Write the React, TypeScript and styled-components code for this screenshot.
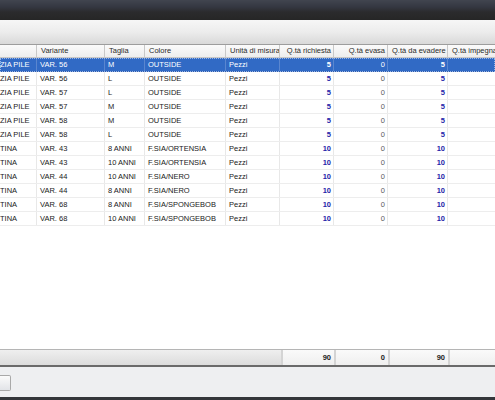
import React from "react";
import styled, { createGlobalStyle } from "styled-components";

const Global = createGlobalStyle`
  html, body { margin: 0; padding: 0; background: #fff; }
  body { font-family: "Liberation Sans", Arial, sans-serif; }
  * { box-sizing: border-box; }
`;

const COLS = "37px 68px 40px 81px 54px 54px 54px 60px 90px";

const Page = styled.div`
  width: 495px;
  height: 400px;
  display: flex;
  flex-direction: column;
  overflow: hidden;
  font-family: "Liberation Sans", Arial, sans-serif;
  font-size: 7.5px;
`;

const TitleBar = styled.div`
  height: 20px;
  flex: none;
  background: linear-gradient(#41454f 0%, #343741 35%, #2b2b2d 60%, #262626 100%);
`;

const Toolbar = styled.div`
  height: 25px;
  flex: none;
  background: linear-gradient(#f6f6f6 0%, #ececec 50%, #d9d9d9 100%);
  border-bottom: 1px solid #9d9d9d;
`;

const GridArea = styled.div`
  flex: 1;
  background: #fff;
  overflow: hidden;
`;

const Row = styled.div<{ $selected?: boolean }>`
  display: grid;
  grid-template-columns: ${COLS};
  height: 14px;
  background: ${(p) => (p.$selected ? "#316ac5" : "#fff")};
  color: ${(p) => (p.$selected ? "#fff" : "#1a1a1a")};
  border-bottom: 1px solid ${(p) => (p.$selected ? "#2a5cb0" : "#ededed")};
  outline: ${(p) => (p.$selected ? "1px dotted #9ab6e6" : "none")};
  outline-offset: -1px;
`;

const HeaderRow = styled.div`
  display: grid;
  grid-template-columns: ${COLS};
  height: 13px;
  background: linear-gradient(#fbfbfb, #ededed);
  border-bottom: 1px solid #c6c6c6;
  color: #2a2a2a;
`;

const HeadCell = styled.div<{ $right?: boolean }>`
  border-right: 1px solid #c8c8c8;
  padding: 0 2px 0 ${(p) => (p.$right ? "3px" : "4px")};
  line-height: 12px;
  white-space: nowrap;
  overflow: hidden;
  text-align: ${(p) => (p.$right ? "right" : "left")};
  &:first-child { padding-left: 0; }
`;

const Cell = styled.div<{ $num?: "blue" | "plain"; $sel?: boolean }>`
  border-right: 1px solid ${(p) => (p.$sel ? "#5a86cf" : "#e8e8e8")};
  padding: 0 2px 0 3px;
  line-height: 13px;
  white-space: nowrap;
  overflow: hidden;
  text-align: ${(p) => (p.$num ? "right" : "left")};
  font-weight: ${(p) => (p.$num === "blue" ? "bold" : "normal")};
  color: ${(p) =>
    p.$sel ? "#fff" : p.$num === "blue" ? "#2424a8" : p.$num === "plain" ? "#5a5a5a" : "inherit"};
  &:first-child { padding-left: 0; }
`;

const TotalsBar = styled.div`
  flex: none;
  height: 16px;
  display: grid;
  grid-template-columns: 281px 53px 54px 60px 60px;
  border-top: 1px solid #b5b5b5;
  background: linear-gradient(#efefef, #dcdcdc);
`;

const TotalCell = styled.div<{ $blank?: boolean }>`
  background: ${(p) => (p.$blank ? "transparent" : "linear-gradient(#fafafa, #efefef)")};
  border-left: ${(p) => (p.$blank ? "none" : "2px solid #d4d4d4")};
  padding-right: 3px;
  text-align: right;
  font-weight: bold;
  color: #222;
  line-height: 15px;
`;

const Divider = styled.div`
  flex: none;
  height: 2px;
  background: #6a6a6a;
`;

const BottomPanel = styled.div`
  flex: none;
  height: 30px;
  background: #eeeff1;
  display: flex;
  align-items: center;
  padding-top: 1px;
`;

const SmallButton = styled.div`
  width: 11px;
  height: 16px;
  border: 1px solid #a9a9a9;
  border-left: none;
  border-radius: 0 2px 2px 0;
  background: linear-gradient(#fbfbfb, #e2e4e8);
`;

const BottomEdge = styled.div`
  flex: none;
  height: 3px;
  background: #34363a;
`;

type R = [string, string, string, string, number];

const rows: R[] = [
  ["ZIA PILE", "VAR. 56", "M", "OUTSIDE", 5],
  ["ZIA PILE", "VAR. 56", "L", "OUTSIDE", 5],
  ["ZIA PILE", "VAR. 57", "L", "OUTSIDE", 5],
  ["ZIA PILE", "VAR. 57", "M", "OUTSIDE", 5],
  ["ZIA PILE", "VAR. 58", "M", "OUTSIDE", 5],
  ["ZIA PILE", "VAR. 58", "L", "OUTSIDE", 5],
  ["TINA", "VAR. 43", "8 ANNI", "F.SIA/ORTENSIA", 10],
  ["TINA", "VAR. 43", "10 ANNI", "F.SIA/ORTENSIA", 10],
  ["TINA", "VAR. 44", "10 ANNI", "F.SIA/NERO", 10],
  ["TINA", "VAR. 44", "8 ANNI", "F.SIA/NERO", 10],
  ["TINA", "VAR. 68", "8 ANNI", "F.SIA/SPONGEBOB", 10],
  ["TINA", "VAR. 68", "10 ANNI", "F.SIA/SPONGEBOB", 10],
];

export default function App() {
  return (
    <Page>
      <Global />
      <TitleBar />
      <Toolbar />
      <GridArea>
        <HeaderRow>
          <HeadCell />
          <HeadCell>Variante</HeadCell>
          <HeadCell>Taglia</HeadCell>
          <HeadCell>Colore</HeadCell>
          <HeadCell>Unità di misura</HeadCell>
          <HeadCell $right>Q.tà richiesta</HeadCell>
          <HeadCell $right>Q.tà evasa</HeadCell>
          <HeadCell>Q.tà da evadere</HeadCell>
          <HeadCell>Q.tà impegnata</HeadCell>
        </HeaderRow>
        {rows.map((r, i) => {
          const sel = i === 0;
          return (
            <Row key={i} $selected={sel}>
              <Cell $sel={sel}>{r[0]}</Cell>
              <Cell $sel={sel}>{r[1]}</Cell>
              <Cell $sel={sel}>{r[2]}</Cell>
              <Cell $sel={sel}>{r[3]}</Cell>
              <Cell $sel={sel}>Pezzi</Cell>
              <Cell $sel={sel} $num="blue">{r[4]}</Cell>
              <Cell $sel={sel} $num="plain">0</Cell>
              <Cell $sel={sel} $num="blue">{r[4]}</Cell>
              <Cell $sel={sel} />
            </Row>
          );
        })}
      </GridArea>
      <TotalsBar>
        <TotalCell $blank />
        <TotalCell>90</TotalCell>
        <TotalCell>0</TotalCell>
        <TotalCell>90</TotalCell>
        <TotalCell />
      </TotalsBar>
      <Divider />
      <BottomPanel>
        <SmallButton />
      </BottomPanel>
      <BottomEdge />
    </Page>
  );
}
